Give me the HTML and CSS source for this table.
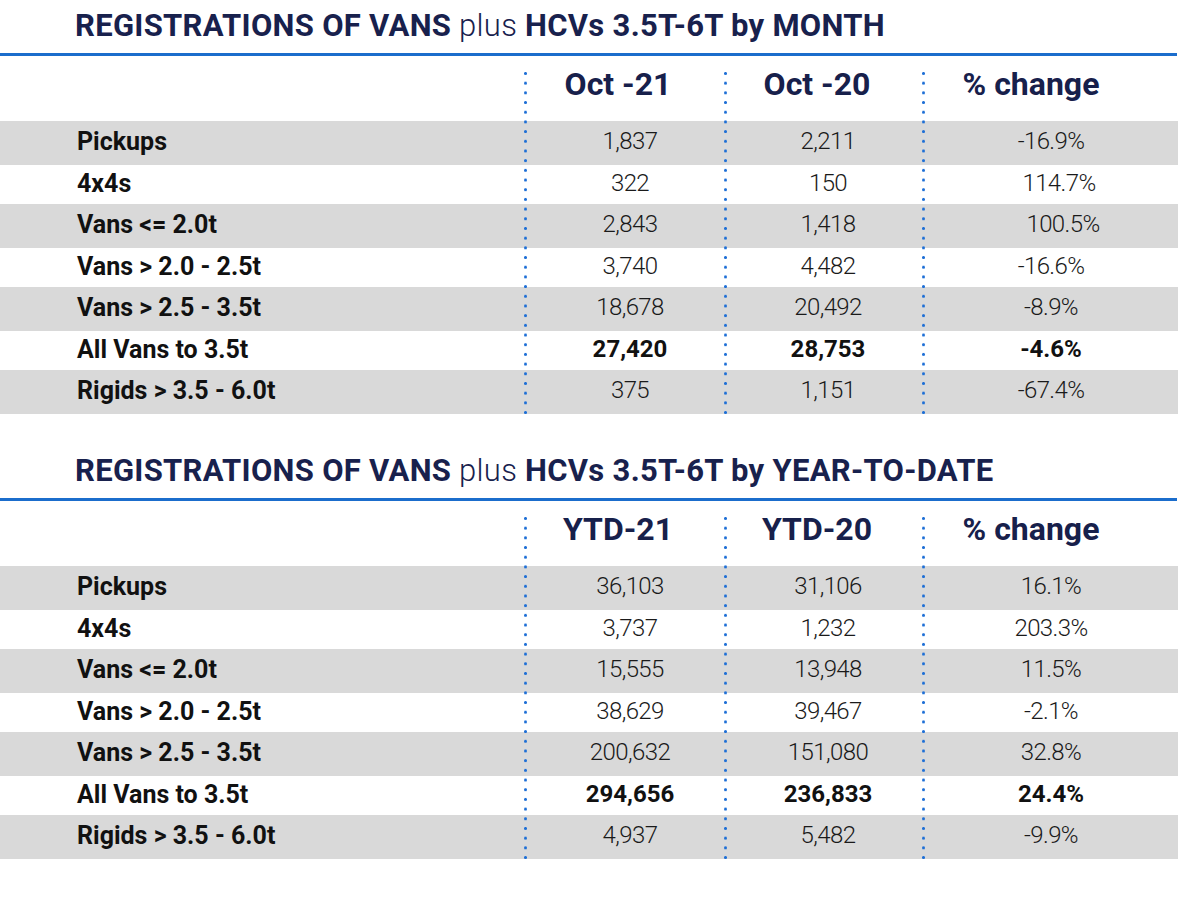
FILE: index.html
```html
<!DOCTYPE html>
<html lang="en">
<head>
<meta charset="utf-8">
<title>Registrations of vans plus HCVs</title>
<link rel="stylesheet" href="styles.css">
</head>
<body>
<section class="block">
  <h2 class="title"><b>REGISTRATIONS OF VANS</b> plus <b>HCVs 3.5T-6T by MONTH</b></h2>
  <div class="table">
    <div class="row head">
      <div class="label"></div>
      <div class="hcell">Oct -21</div>
      <div class="hcell">Oct -20</div>
      <div class="hcell pct">% change</div>
    </div>
    <div class="row shade"><div class="label">Pickups</div><div class="num">1,837</div><div class="num c2">2,211</div><div class="num c3">-16.9%</div></div>
    <div class="row"><div class="label">4x4s</div><div class="num">322</div><div class="num c2">150</div><div class="num c3 pos">114.7%</div></div>
    <div class="row shade"><div class="label">Vans &lt;= 2.0t</div><div class="num">2,843</div><div class="num c2">1,418</div><div class="num c3 pos2">100.5%</div></div>
    <div class="row"><div class="label">Vans &gt; 2.0 - 2.5t</div><div class="num">3,740</div><div class="num c2">4,482</div><div class="num c3">-16.6%</div></div>
    <div class="row shade"><div class="label">Vans &gt; 2.5 - 3.5t</div><div class="num">18,678</div><div class="num c2">20,492</div><div class="num c3">-8.9%</div></div>
    <div class="row total"><div class="label">All Vans to 3.5t</div><div class="num">27,420</div><div class="num c2">28,753</div><div class="num c3">-4.6%</div></div>
    <div class="row shade"><div class="label">Rigids &gt; 3.5 - 6.0t</div><div class="num">375</div><div class="num c2">1,151</div><div class="num c3">-67.4%</div></div>
    <span class="rule r1"></span><span class="rule r2"></span><span class="rule r3"></span>
  </div>
</section>

<section class="block second">
  <h2 class="title"><b>REGISTRATIONS OF VANS</b> plus <b>HCVs 3.5T-6T by YEAR-TO-DATE</b></h2>
  <div class="table">
    <div class="row head">
      <div class="label"></div>
      <div class="hcell">YTD-21</div>
      <div class="hcell">YTD-20</div>
      <div class="hcell pct">% change</div>
    </div>
    <div class="row shade"><div class="label">Pickups</div><div class="num">36,103</div><div class="num c2">31,106</div><div class="num c3">16.1%</div></div>
    <div class="row"><div class="label">4x4s</div><div class="num">3,737</div><div class="num c2">1,232</div><div class="num c3">203.3%</div></div>
    <div class="row shade"><div class="label">Vans &lt;= 2.0t</div><div class="num">15,555</div><div class="num c2">13,948</div><div class="num c3">11.5%</div></div>
    <div class="row"><div class="label">Vans &gt; 2.0 - 2.5t</div><div class="num">38,629</div><div class="num c2">39,467</div><div class="num c3">-2.1%</div></div>
    <div class="row shade"><div class="label">Vans &gt; 2.5 - 3.5t</div><div class="num">200,632</div><div class="num c2">151,080</div><div class="num c3">32.8%</div></div>
    <div class="row total"><div class="label">All Vans to 3.5t</div><div class="num">294,656</div><div class="num c2">236,833</div><div class="num c3">24.4%</div></div>
    <div class="row shade"><div class="label">Rigids &gt; 3.5 - 6.0t</div><div class="num">4,937</div><div class="num c2">5,482</div><div class="num c3">-9.9%</div></div>
    <span class="rule r1"></span><span class="rule r2"></span><span class="rule r3"></span>
  </div>
</section>
</body>
</html>
```

FILE: styles.css
```css
html, body {
  margin: 0;
  padding: 0;
  background: #ffffff;
}

body {
  font-family: Roboto, "Liberation Sans", sans-serif;
  color: #141414;
}

.block {
  width: 1178px;
}

.second {
  margin-top: 31px;
}

.title {
  margin: 0 0 2px 0;
  padding-left: 75px;
  font-size: 31px;
  letter-spacing: 0.3px;
  line-height: 51px;
  height: 51px;
  font-weight: 300;
  color: #18214d;
  white-space: nowrap;
}

.title b {
  font-weight: 700;
}

.table {
  position: relative;
  border-top: 3px solid #1b6dcc;
  width: 1177px;
}

.row {
  display: grid;
  grid-template-columns: 526px 200px 198px 254px;
  align-items: center;
  height: 39px;
  box-sizing: border-box;
  padding-bottom: 3px;
  width: 1178px;
}

.row.shade {
  background: #d9d9d9;
  height: 44px;
  padding-bottom: 4px;
}

.row.head {
  height: 65px;
  padding-bottom: 0;
  align-items: start;
}

.hcell {
  font-size: 32px;
  line-height: 57px;
  font-weight: 700;
  color: #17204b;
  text-align: center;
  padding-right: 16px;
  white-space: nowrap;
}

.hcell.pct {
  padding-right: 40px;
}

.label {
  padding-left: 77px;
  font-size: 25px;
  font-weight: 700;
  color: #111111;
  white-space: nowrap;
}

.num {
  font-size: 24px;
  font-weight: 300;
  letter-spacing: -0.6px;
  text-align: center;
  padding-left: 8px;
  color: #1a1a1a;
}

.num.c2 {
  padding-left: 6px;
}

.num.c3 {
  padding-left: 0;
}

.num.pos {
  padding-left: 16px;
}

.num.pos2 {
  padding-left: 24px;
}

.row.total .num {
  font-weight: 700;
  letter-spacing: 0;
  color: #111111;
}

.rule {
  position: absolute;
  top: 16px;
  bottom: 0;
  width: 3px;
  background-image: radial-gradient(circle at 1.5px 1.5px, #1e6fd6 1.2px, rgba(30, 111, 214, 0) 1.7px);
  background-size: 3px 9.7px;
  background-repeat: repeat-y;
}

.r1 { left: 524px; }
.r2 { left: 724px; }
.r3 { left: 922px; }
```
